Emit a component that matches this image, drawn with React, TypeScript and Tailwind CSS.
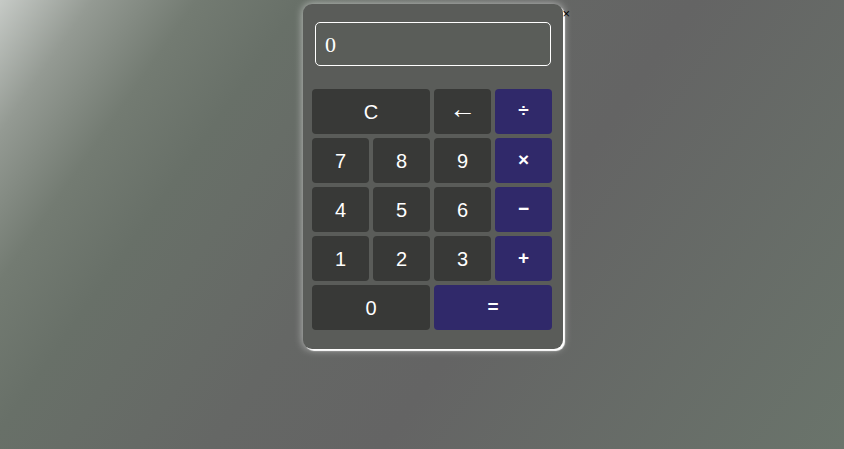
import React, { useState } from 'react';

const keys: { label: string; op?: boolean; wide?: boolean; big?: boolean; bold?: boolean }[] = [
  { label: 'C', wide: true },
  { label: '←', big: true },
  { label: '÷', op: true, bold: true },
  { label: '7' },
  { label: '8' },
  { label: '9' },
  { label: '×', op: true, bold: true },
  { label: '4' },
  { label: '5' },
  { label: '6' },
  { label: '−', op: true, bold: true },
  { label: '1' },
  { label: '2' },
  { label: '3' },
  { label: '+', op: true, bold: true },
  { label: '0', wide: true },
  { label: '=', op: true, wide: true, bold: true },
];

export default function App() {
  const [value] = useState('0');

  return (
    <div className="min-h-[449px] w-full bg-[linear-gradient(125deg,#c6cac6_0%,#949a93_8%,#737b72_17%,#687068_26%,#656765_45%,#646464_60%,#6a746b_100%)] pt-[4px] font-['Liberation_Sans',Arial,sans-serif]">
      <div className="relative ml-[303px] w-[260px] rounded-[9px] bg-[#5a5c59] pt-[18px] pr-[11px] pb-[19px] pl-[9px] shadow-[2px_2px_1px_#fff,0_0_8px_rgba(255,255,255,0.6)]">
        <span className="absolute -right-[7px] top-[3px] text-[13px] leading-none text-black">×</span>
        <div className="ml-[3px] flex h-[44px] w-[236px] items-center rounded-[5px] border border-white bg-[#5a5d59] pl-[9px] font-['Liberation_Serif',serif] text-[22px] text-white">
          {value}
        </div>
        <div className="mt-[23px] grid w-[240px] grid-cols-4 gap-[4px]">
          {keys.map(k => (
            <button
              key={k.label}
              className={[
                'flex h-[45px] items-center justify-center rounded-[4px] text-white',
                k.wide ? 'col-span-2' : '',
                k.op ? 'bg-[#30296a]' : 'bg-[#383937]',
                k.bold ? 'font-semibold' : '',
                k.big ? 'pb-[4px] text-[27px]' : k.op ? 'text-[19px]' : 'text-[20px]',
              ].join(' ')}
            >
              {k.label}
            </button>
          ))}
        </div>
      </div>
    </div>
  );
}
